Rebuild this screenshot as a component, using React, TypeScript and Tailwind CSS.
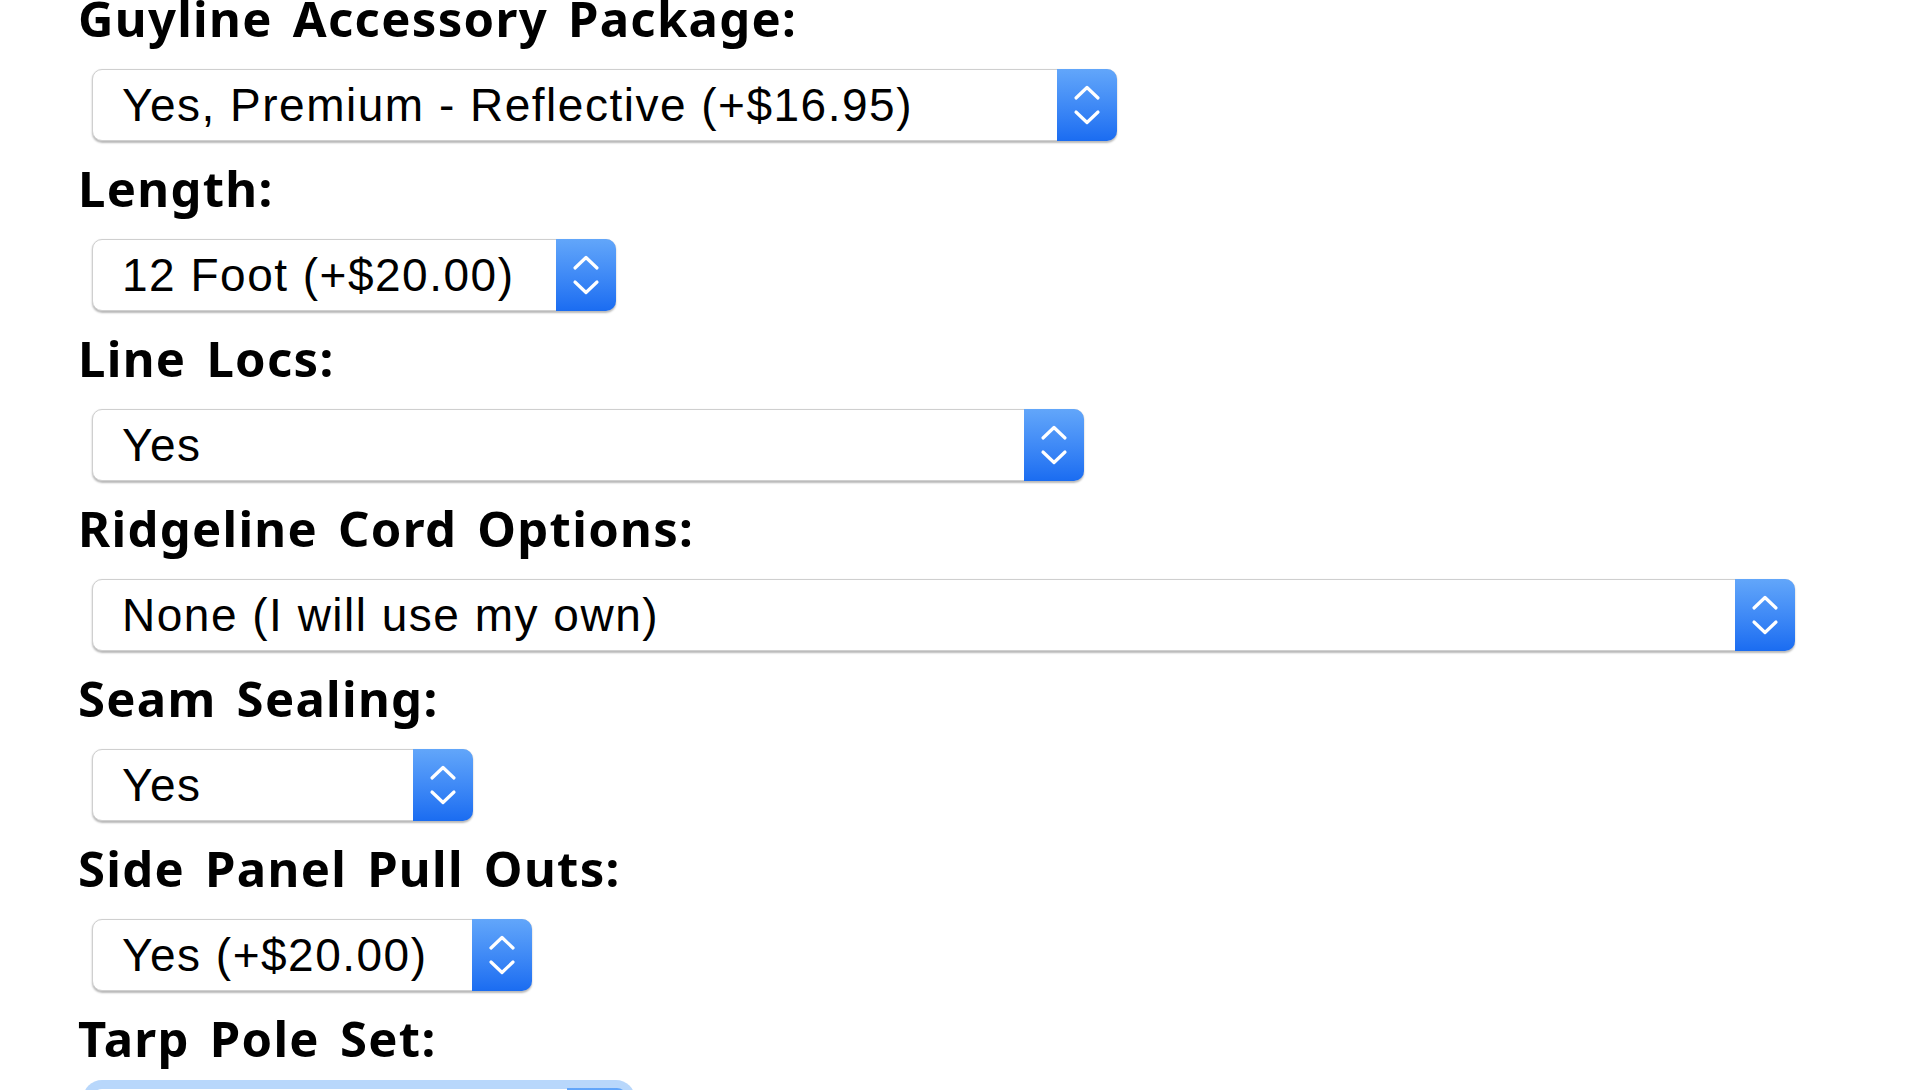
import React from "react";

interface Option {
  label: string;
  value: string;
  width: number;
  focused?: boolean;
}

const options: Option[] = [
  { label: "Guyline Accessory Package:", value: "Yes, Premium - Reflective (+$16.95)", width: 1025 },
  { label: "Length:", value: "12 Foot (+$20.00)", width: 524 },
  { label: "Line Locs:", value: "Yes", width: 992 },
  { label: "Ridgeline Cord Options:", value: "None (I will use my own)", width: 1703 },
  { label: "Seam Sealing:", value: "Yes", width: 381 },
  { label: "Side Panel Pull Outs:", value: "Yes (+$20.00)", width: 440 },
  { label: "Tarp Pole Set:", value: "", width: 534, focused: true },
];

const Chevrons = () => (
  <svg width="28" height="40" viewBox="0 0 28 40" fill="none">
    <path d="M3 13 L14 2.5 L25 13" stroke="white" strokeWidth="3.2" strokeLinecap="round" strokeLinejoin="round" />
    <path d="M3 27 L14 37.5 L25 27" stroke="white" strokeWidth="3.2" strokeLinecap="round" strokeLinejoin="round" />
  </svg>
);

const FakeSelect = ({ option }: { option: Option }) => (
  <div
    className={
      option.focused
        ? "ml-[14px] mt-[31px] h-[72px] flex rounded-[10px] bg-white shadow-[0_0_0_9px_#b8d7fb]"
        : "ml-[14px] mt-[31px] h-[72px] flex rounded-[10px] bg-white border border-[#cfcfcf] shadow-[0_1.5px_2px_rgba(0,0,0,0.28)]"
    }
    style={{ width: option.width }}
  >
    <div className="flex-1 flex items-center pl-[29px] text-[46px] tracking-[1.5px] text-black font-['Liberation_Sans',Arial,sans-serif] whitespace-nowrap overflow-hidden">
      {option.value}
    </div>
    <div className="w-[60px] -my-px -mr-px flex items-center justify-center rounded-r-[10px] bg-gradient-to-b from-[#62a6fa] to-[#1a6cf1]">
      <Chevrons />
    </div>
  </div>
);

export default function App() {
  return (
    <div className="h-[1090px] overflow-hidden bg-white pl-[78px]">
      <div className="flex flex-col -mt-[2px]">
        {options.map((option) => (
          <div key={option.label} className="pb-[27px]">
            <div className="h-[40px] leading-[40px] text-[49px] font-bold tracking-[1.3px] [word-spacing:6px] text-black whitespace-nowrap font-['Noto_Sans',sans-serif]">
              {option.label}
            </div>
            <FakeSelect option={option} />
          </div>
        ))}
      </div>
    </div>
  );
}
